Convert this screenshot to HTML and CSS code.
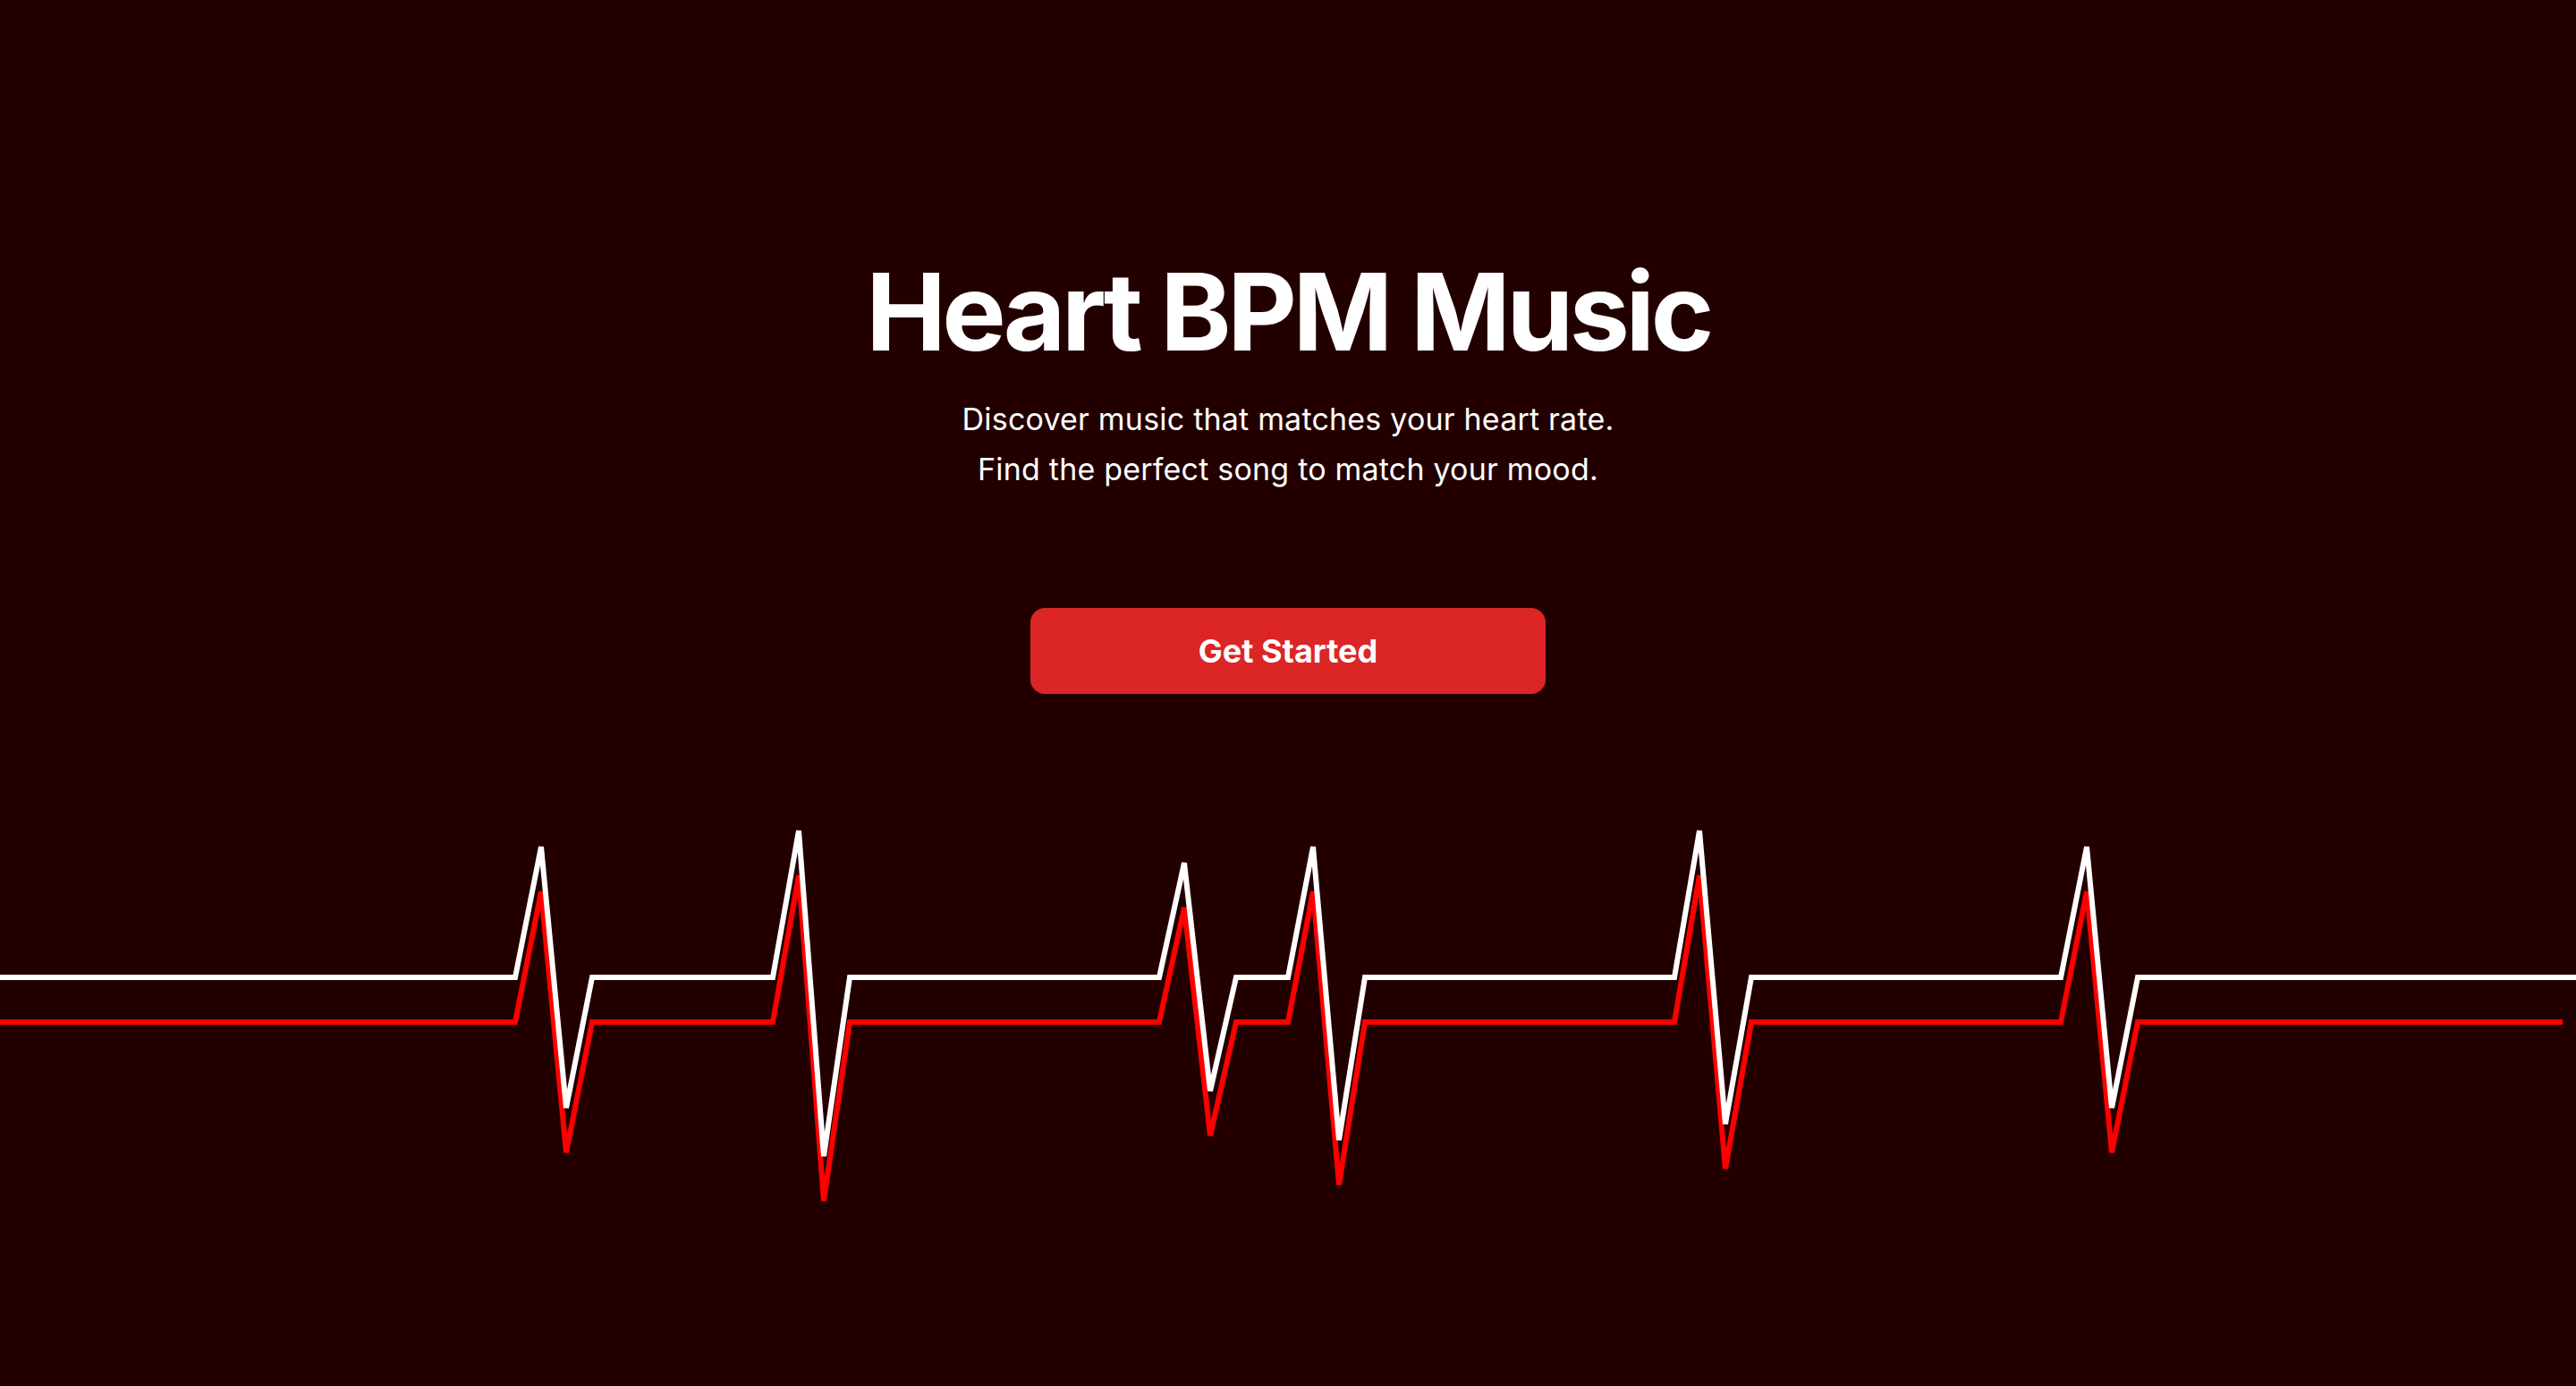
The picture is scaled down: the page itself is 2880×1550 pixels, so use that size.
FILE: index.html
```html
<!DOCTYPE html>
<html lang="en">
<head>
<meta charset="utf-8">
<title>Heart BPM Music</title>
<link rel="stylesheet" href="styles.css">
</head>
<body>
<main class="hero">
  <h1 class="title">Heart BPM Music</h1>
  <p class="subtitle">Discover music that matches your heart rate.<br>Find the perfect song to match your mood.</p>
  <button class="cta" type="button">Get Started</button>
  <svg class="ecg" width="2880" height="450" viewBox="0 900 2880 450" aria-hidden="true">
    <polyline class="ecg-red" points="-10,1143 576,1143 605,997 633,1289 662,1143 864,1143 893,979 921,1343 950,1143 1296,1143 1324,1015 1353,1270 1382,1143 1440,1143 1468,997 1497,1325 1526,1143 1872,1143 1900,979 1929,1307 1958,1143 2304,1143 2333,997 2361,1289 2390,1143 2865,1143"/>
    <polyline class="ecg-white" points="-10,1093 576,1093 605,947 633,1239 662,1093 864,1093 893,929 921,1293 950,1093 1296,1093 1324,965 1353,1220 1382,1093 1440,1093 1468,947 1497,1275 1526,1093 1872,1093 1900,929 1929,1257 1958,1093 2304,1093 2333,947 2361,1239 2390,1093 2890,1093"/>
  </svg>
</main>
</body>
</html>
```

FILE: styles.css
```css
html, body {
  margin: 0;
  padding: 0;
}

body {
  background: #230000;
  color: #ffffff;
  font-family: Inter, "Noto Sans", "DejaVu Sans", sans-serif;
  width: 2880px;
  height: 1550px;
  overflow: hidden;
}

.hero {
  display: flex;
  flex-direction: column;
  align-items: center;
  padding-top: 289px;
}

.title {
  margin: 0 0 32px;
  font-size: 120px;
  line-height: 120px;
  font-weight: 700;
  letter-spacing: -4.4px;
  text-align: center;
}

.subtitle {
  margin: 0 0 127px;
  font-size: 34px;
  line-height: 56px;
  font-weight: 400;
  letter-spacing: 0.2px;
  text-align: center;
}

.cta {
  width: 576px;
  height: 96px;
  border: 0;
  border-radius: 16px;
  background: #dc2626;
  color: #ffffff;
  font-family: Inter, "Noto Sans", "DejaVu Sans", sans-serif;
  font-size: 36px;
  font-weight: 700;
  padding: 0;
}

.ecg {
  display: block;
  margin-top: 124px;
  flex-shrink: 0;
}

.ecg polyline {
  fill: none;
  stroke-width: 6;
}

.ecg-red {
  stroke: #ff0000;
}

.ecg-white {
  stroke: #ffffff;
}
```
